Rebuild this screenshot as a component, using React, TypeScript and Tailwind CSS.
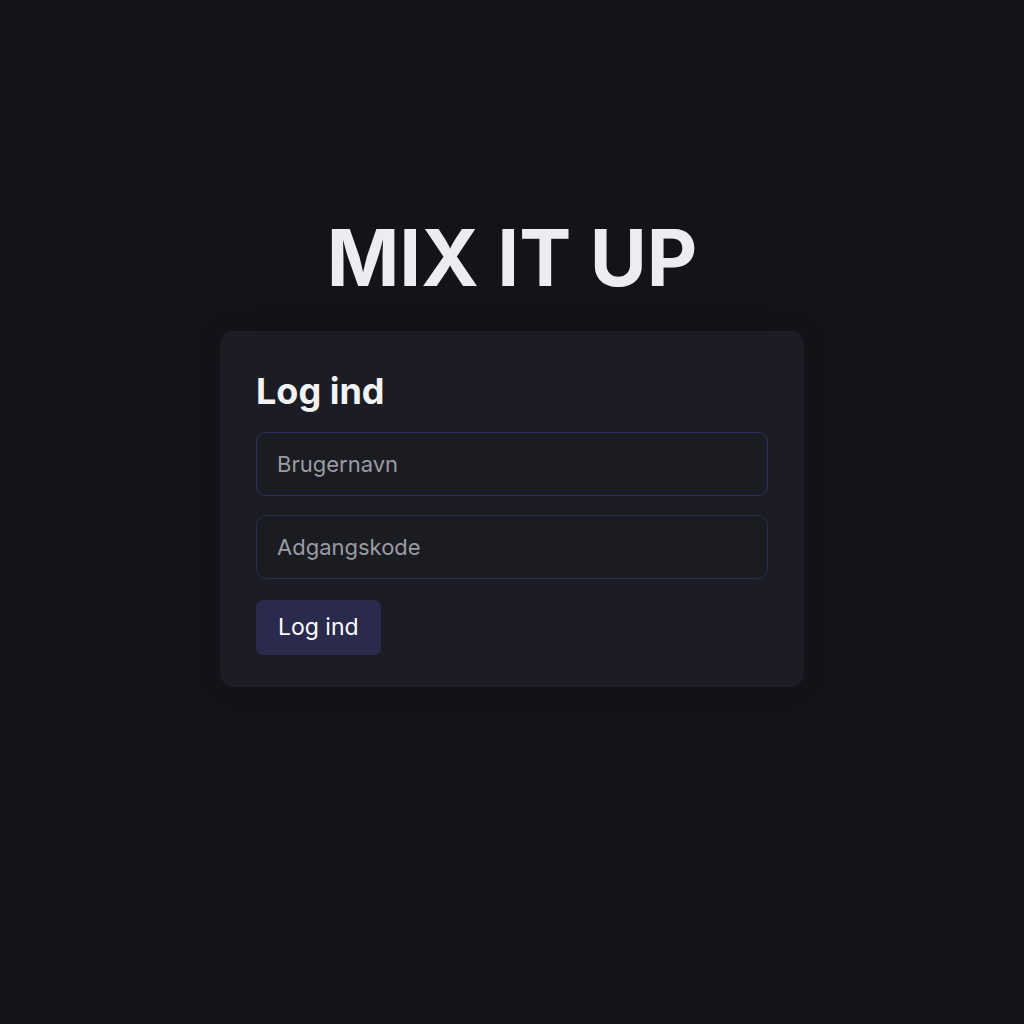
export default function App() {
  return (
    <div
      className="flex min-h-screen flex-col items-center bg-[#131419] pt-[219px] text-white"
      style={{ fontFamily: "Inter, 'Noto Sans', sans-serif" }}
    >
      <h1 className="text-[78px] font-bold leading-none text-[#ececf1]">MIX IT UP</h1>

      <div className="mt-[34px] w-[584px] rounded-[14px] bg-[#1c1d24] px-[36px] pb-[32px] pt-[36px] shadow-[0_0_30px_rgba(0,0,0,0.12)]">
        <h2 className="text-[36px] font-bold leading-[48px] text-[#f3f3f6]">Log ind</h2>

        <form className="mt-[17px] flex flex-col gap-[19px]" onSubmit={(e) => e.preventDefault()}>
          <input
            type="text"
            placeholder="Brugernavn"
            className="h-[64px] w-full rounded-[10px] border border-[#2e3160] bg-[#1b1c22] px-[20px] text-[22px] text-white outline-none placeholder:text-[#9a9ba3]"
          />
          <input
            type="password"
            placeholder="Adgangskode"
            className="h-[64px] w-full rounded-[10px] border border-[#2c2d50] bg-[#1b1c22] px-[20px] text-[22px] text-white outline-none placeholder:text-[#9a9ba3]"
          />
          <div className="pt-[2px]">
            <button
              type="submit"
              className="h-[55px] rounded-[7px] bg-[#2a2a4c] px-[22px] text-[23px] text-white"
            >
              Log ind
            </button>
          </div>
        </form>
      </div>
    </div>
  );
}
